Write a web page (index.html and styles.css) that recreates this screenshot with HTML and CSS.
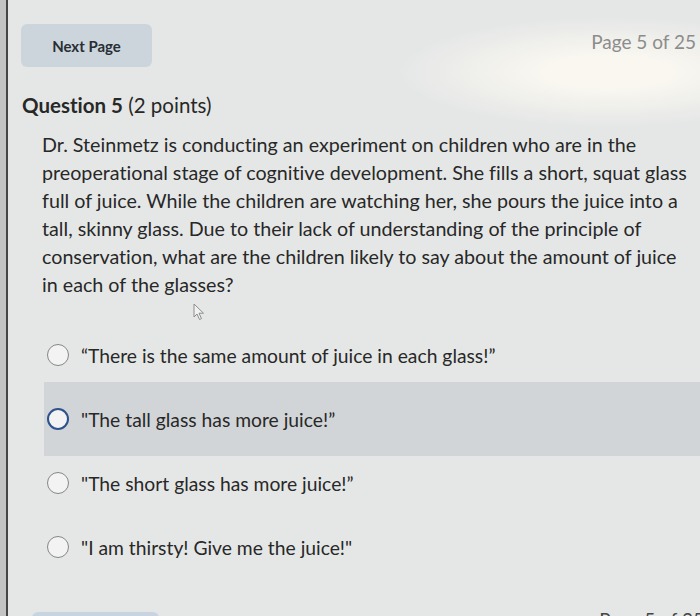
FILE: index.html
```html
<!DOCTYPE html>
<html>

<head>
    <title>Quiz - Question 5</title>
    <link rel="stylesheet" href="styles.css">
</head>

<body>
    <div class="frame">

        <div class="top-bar">
            <a class="next-btn" href="#">Next Page</a>
            <span class="page-count">Page 5 of 25</span>
        </div>

        <div class="question">
            <p class="question-title"><b>Question 5</b> (2 points)</p>

            <p class="question-text">
                Dr. Steinmetz is conducting an experiment on children who are in the<br>
                preoperational stage of cognitive development. She fills a short, squat glass<br>
                full of juice. While the children are watching her, she pours the juice into a<br>
                tall, skinny glass. Due to their lack of understanding of the principle of<br>
                conservation, what are the children likely to say about the amount of juice<br>
                in each of the glasses?
            </p>

            <!-- puntatore del mouse sopra il testo -->
            <svg class="cursor" width="14" height="18" viewBox="0 0 14 18">
                <path d="M2 1 L2 14 L5 11 L7.5 16.5 L9.5 15.6 L7 10.2 L11.5 10.2 Z" fill="#f2f2f2" stroke="#8c8c8c" stroke-width="1" stroke-linejoin="round" />
            </svg>

            <div class="options">
                <label class="option">
                    <span class="radio"></span>
                    <span>“There is the same amount of juice in each glass!”</span>
                </label>
                <label class="option selected">
                    <span class="radio"></span>
                    <span>"The tall glass has more juice!”</span>
                </label>
                <label class="option">
                    <span class="radio"></span>
                    <span>"The short glass has more juice!”</span>
                </label>
                <label class="option">
                    <span class="radio"></span>
                    <span>"I am thirsty! Give me the juice!"</span>
                </label>
            </div>
        </div>

        <div class="bottom-bar">
            <span class="prev-btn"></span>
            <span class="page-count">Page 5 of 25</span>
        </div>

    </div>
</body>

</html>
```

FILE: styles.css
```css
body {
    margin: 0;
    padding: 0;
    font-family: Lato, "Noto Sans", Arial, sans-serif;
    font-variant-ligatures: none;
    background-color: rgb(196, 196, 196);
    color: rgb(40, 40, 40);
    overflow: hidden;
}

.frame {
    margin-left: 6px;
    border-left: 2px solid rgb(70, 70, 70);
    height: 616px;
    overflow: hidden;
    background-color: rgb(229, 231, 231);
    background-image: radial-gradient(ellipse 210px 55px at 600px 72px, rgba(249, 247, 240, 1) 30%, rgba(249, 247, 240, 0));
}

.top-bar {
    display: flex;
    justify-content: space-between;
    align-items: center;
    padding-top: 24px;
    padding-left: 13px;
}

.next-btn {
    display: flex;
    justify-content: center;
    align-items: center;
    width: 131px;
    height: 43px;
    border-radius: 6px;
    background-color: rgb(205, 213, 220);
    color: rgb(40, 46, 52);
    text-decoration: none;
    font-weight: bold;
    font-size: 15px;
}

.page-count {
    font-size: 19px;
    color: rgb(140, 140, 140);
    margin-right: 4px;
    margin-top: -8px;
    white-space: nowrap;
}

.question {
    position: relative;
}

.question-title {
    margin: 26px 0 0 14px;
    font-size: 20.5px;
    line-height: 24px;
}

.question-title b {
    font-weight: bold;
}

.question-text {
    margin: 14px 0 0 34px;
    font-size: 19.7px;
    line-height: 28px;
    white-space: nowrap;
}

.cursor {
    position: absolute;
    left: 184px;
    top: 210px;
}

.options {
    margin: 24px 0 0 36px;
}

.option {
    display: flex;
    align-items: center;
    height: 64px;
    padding-left: 3px;
    font-size: 19.3px;
    cursor: pointer;
}

.option.selected {
    height: 74px;
    margin: -5px 0;
    background-color: rgb(210, 213, 215);
}

.radio {
    width: 20px;
    height: 20px;
    border-radius: 50%;
    border: 1.5px solid rgb(135, 135, 135);
    background-color: rgb(243, 243, 243);
    margin-right: 12px;
    flex-shrink: 0;
}

.option.selected .radio {
    border: 2.5px solid rgb(45, 82, 140);
    width: 18px;
    height: 18px;
}

.bottom-bar {
    display: flex;
    justify-content: space-between;
    margin-top: 29px;
    padding-left: 24px;
}

.prev-btn {
    width: 127px;
    height: 40px;
    margin-top: 4px;
    border-radius: 6px;
    background-color: rgb(200, 213, 224);
}

.bottom-bar .page-count {
    color: rgb(70, 70, 70);
    margin-top: 0;
    margin-right: -4px;
}
```
